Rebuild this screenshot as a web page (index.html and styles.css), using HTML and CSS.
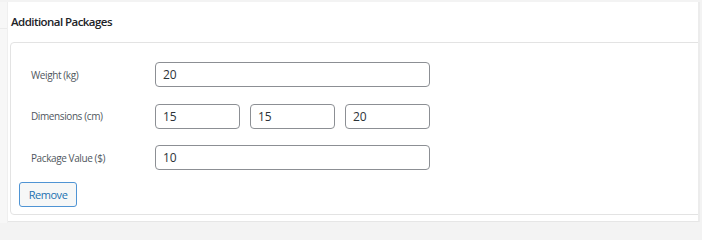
FILE: index.html
```html
<!DOCTYPE html>
<html>
<head>
<meta charset="utf-8">
<link rel="stylesheet" href="styles.css">
</head>
<body>
<div class="page">
  <div class="gutter">
    <div class="gutter-top"></div>
    <div class="gutter-rest"></div>
  </div>
  <div class="panel">
    <h3 class="panel-title">Additional Packages</h3>
    <div class="card">
      <div class="fields">
        <div class="label">Weight (kg)</div>
        <div class="controls"><input class="input full" type="text" value="20"></div>
        <div class="label">Dimensions (cm)</div>
        <div class="controls dims">
          <input class="input" type="text" value="15">
          <input class="input" type="text" value="15">
          <input class="input" type="text" value="20">
        </div>
        <div class="label">Package Value ($)</div>
        <div class="controls"><input class="input full" type="text" value="10"></div>
      </div>
      <button class="btn" type="button">Remove</button>
    </div>
  </div>
</div>
</body>
</html>
```
FILE: styles.css
```css
* { box-sizing: border-box; }
html, body { margin: 0; padding: 0; background: #f3f3f3; }
body {
  font-family: "Open Sans", "Noto Sans", sans-serif;
  width: 702px;
  height: 223px;
  overflow: hidden;
}
.page {
  display: flex;
  padding-top: 2px;
  height: 223px;
}
.gutter {
  width: 8px;
  display: flex;
  flex-direction: column;
  background: #f7f7f7;
  border-right: 1px solid #efefef;
}
.gutter-top {
  height: 27px;
  border-bottom: 1px solid #ebebeb;
}
.gutter-rest { flex: 1; }
.panel {
  width: 692px;
  height: 220px;
  background: #fff;
  border-right: 2px solid #ececec;
  border-bottom: 1px solid #e6e6e6;
  padding: 0 0 0 2px;
  overflow: hidden;
}
.panel-title {
  margin: 0;
  padding: 12px 0 0 1px;
  height: 40px;
  font-size: 11.5px;
  font-weight: 600;
  color: #1d2327;
  letter-spacing: -0.55px;
}
.card {
  width: 700px;
  height: 173px;
  border: 1px solid #e3e3e3;
  border-radius: 4px;
  padding: 19px 8px 7px 8px;
  background: #fff;
}
.fields {
  display: grid;
  grid-template-columns: 124px 275px;
  grid-auto-rows: 25px;
  row-gap: 16.5px;
  padding-left: 12px;
  align-items: center;
}
.label {
  font-size: 10px;
  letter-spacing: -0.4px;
  color: #50575e;
}
.controls { display: flex; }
.dims { gap: 10px; }
.input {
  width: 85px;
  height: 25px;
  border: 1px solid #8c8f94;
  border-radius: 4px;
  padding: 0 7px;
  font-family: inherit;
  font-size: 12px;
  letter-spacing: -0.2px;
  color: #2c3338;
  background: #fff;
}
.input.full { width: 275px; }
.btn {
  margin-top: 12px;
  width: 58px;
  height: 25px;
  border: 1px solid #4f94d4;
  border-radius: 3px;
  background: #f6f7f7;
  color: #2271b1;
  font-family: inherit;
  font-size: 11px;
  letter-spacing: -0.45px;
  padding: 0;
}
```
